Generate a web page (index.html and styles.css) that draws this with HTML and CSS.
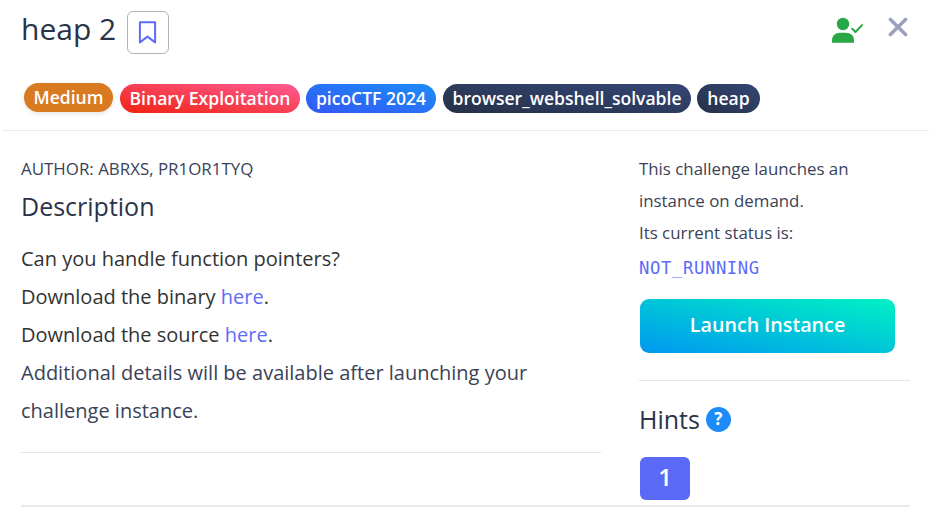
FILE: index.html
```html
<!DOCTYPE html>
<html lang="en">
<head>
<meta charset="utf-8">
<title>heap 2</title>
<link rel="stylesheet" href="styles.css">
</head>
<body>
<main class="modal">
  <header class="modal-header">
    <div class="title-row">
      <h1 class="title">heap 2</h1>
      <button class="bookmark" aria-label="Bookmark">
        <svg width="19" height="24" viewBox="0 0 19 24"><path d="M1.9 2.2h15.2v20.2L9.5 16.6 1.9 22.4z" fill="none" stroke="#5e6cf7" stroke-width="2" stroke-linejoin="round"/></svg>
      </button>
      <div class="actions">
        <svg width="32" height="27" viewBox="0 0 32 27"><circle cx="11" cy="7" r="6.2" fill="#28a745"/><path d="M0 25.8v-2.6c0-4.6 3.4-7.5 8-7.5h6c4.600 0 8 2.900 8 7.500v2.600z" fill="#28a745"/><path d="M20.200 11.800l3.300 3.200 6.500-6.900" fill="none" stroke="#28a745" stroke-width="2" stroke-linecap="round" stroke-linejoin="round"/></svg>
        <svg class="close" width="20" height="20" viewBox="0 0 20 20"><path d="M2.400 2.400l15.200 15.200M17.600 2.400L2.400 17.600" stroke="#9aa1bc" stroke-width="3.500" stroke-linecap="round"/></svg>
      </div>
    </div>
    <div class="tags">
      <span class="tag medium">Medium</span>
      <span class="tag category">Binary Exploitation</span>
      <span class="tag event">picoCTF 2024</span>
      <span class="tag topic shell">browser_webshell_solvable</span>
      <span class="tag topic heap">heap</span>
    </div>
  </header>
  <div class="modal-body">
    <section class="main-col">
      <p class="author">AUTHOR: ABRXS, PR1OR1TYQ</p>
      <h2 class="heading">Description</h2>
      <div class="description">
        <p class="plain">Can you handle function pointers?</p>
        <p class="plain">Download the binary <a>here</a>.</p>
        <p class="plain">Download the source <a>here</a>.</p>
        <p>Additional details will be available after launching your<br>challenge instance.</p>
      </div>
      <hr class="rule main-rule">
    </section>
    <aside class="side-col">
      <p class="status">This challenge launches an<br>instance on demand.<br>Its current status is:</p>
      <code class="state">NOT_RUNNING</code>
      <button class="launch">Launch Instance</button>
      <hr class="rule">
      <div class="hints"><h2 class="hints-title">Hints</h2><span class="help">?</span></div>
      <button class="hint">1</button>
    </aside>
  </div>
  <hr class="bottom-rule">
</main>
</body>
</html>
```

FILE: styles.css
```css
* { box-sizing: border-box; }
body { margin: 0; background: #fff; color: #3a4258; font-family: "Open Sans", "Noto Sans", sans-serif; overflow: hidden; }
h1, h2, p { margin: 0; font-weight: 400; }
button { border: 0; padding: 0; font-family: inherit; }
svg { display: block; }
a { color: #5e6cf7; }
.modal { height: 507px; display: flex; flex-direction: column; }
.modal-header { height: 131px; margin: 0 3px 0 2px; padding: 11px 0 0 19px; border-bottom: 1px solid #e9ebed; }
.title-row { display: flex; height: 43px; }
.title { font-size: 30px; line-height: 37px; margin-top: -1px; width: 106px; color: #2b3348; white-space: nowrap; }
.bookmark { width: 42px; height: 43px; border: 1px solid #adb5bd; border-radius: 6px; background: #fff; display: grid; place-items: center; padding: 0 2px 2px 0; }
.actions { margin-left: auto; padding: 6px 21px 0 0; display: flex; gap: 24px; }
.tags { display: flex; padding: 30px 0 0 3px; gap: 7px; }
.tag { height: 29px; border-radius: 15px; line-height: 28px; text-align: center; color: #fff; font-size: 17.550px; font-weight: 600; white-space: nowrap; }
.medium { width: 89px; margin-top: -1px; background: #d97920; box-shadow: 0 2px 4px #0000001a; }
.category { width: 180px; background: linear-gradient(to top right, #f02311, #ff5c95); }
.event { width: 130px; margin-left: -1px; background: linear-gradient(to top right, #3358f4, #1d8cf8); }
.topic { background: linear-gradient(to top right, #263148, #344675); }
.shell { width: 248px; }
.heap { width: 63px; margin-left: -1px; }
.modal-body { display: flex; height: 374px; padding: 22px 22px 0 21px; }
.main-col { width: 580px; margin-right: 38px; }
.author { font-size: 16.900px; line-height: 32px; white-space: nowrap; }
.heading { font-size: 25px; line-height: 34px; margin-top: 4px; color: #2b3348; }
.description { margin-top: 17px; font-size: 20px; line-height: 38px; white-space: nowrap; }
.plain { color: #333; }
.rule { margin: 0; border: 0; border-top: 1px solid #e5e5e6; }
.main-rule { margin-top: 22px; }
.side-col { width: 271px; }
.status { font-size: 16.850px; line-height: 32px; white-space: nowrap; }
.state { display: block; font: 17.300px/24px "DejaVu Sans Mono", monospace; letter-spacing: 0.58px; color: #5e6cf7; margin-top: 7px; }
.launch { display: block; width: 255px; height: 54px; margin: 19px 0 27px 1px; padding-bottom: 3px; border-radius: 9px; color: #fff; font-size: 19.700px; font-weight: 600; background: linear-gradient(to top right, #0098f0, #00f2c3); }
.hints { display: flex; align-items: center; height: 40px; margin-top: 18px; gap: 6px; }
.hints-title { font-size: 25px; line-height: 34px; color: #2b3348; }
.help { width: 25px; height: 25px; border-radius: 50%; background: #1d8cf8; color: #fff; font-size: 17px; font-weight: 700; line-height: 24px; text-align: center; }
.hint { display: block; width: 50px; height: 43px; margin: 18px 0 0 1px; padding-bottom: 3px; border-radius: 6px; background: #5a69f6; color: #fff; font-size: 24px; font-weight: 600; line-height: 40px; }
.bottom-rule { margin: 0 22px 0 21px; border: 0; border-top: 2px solid #e9e9ea; }
```
